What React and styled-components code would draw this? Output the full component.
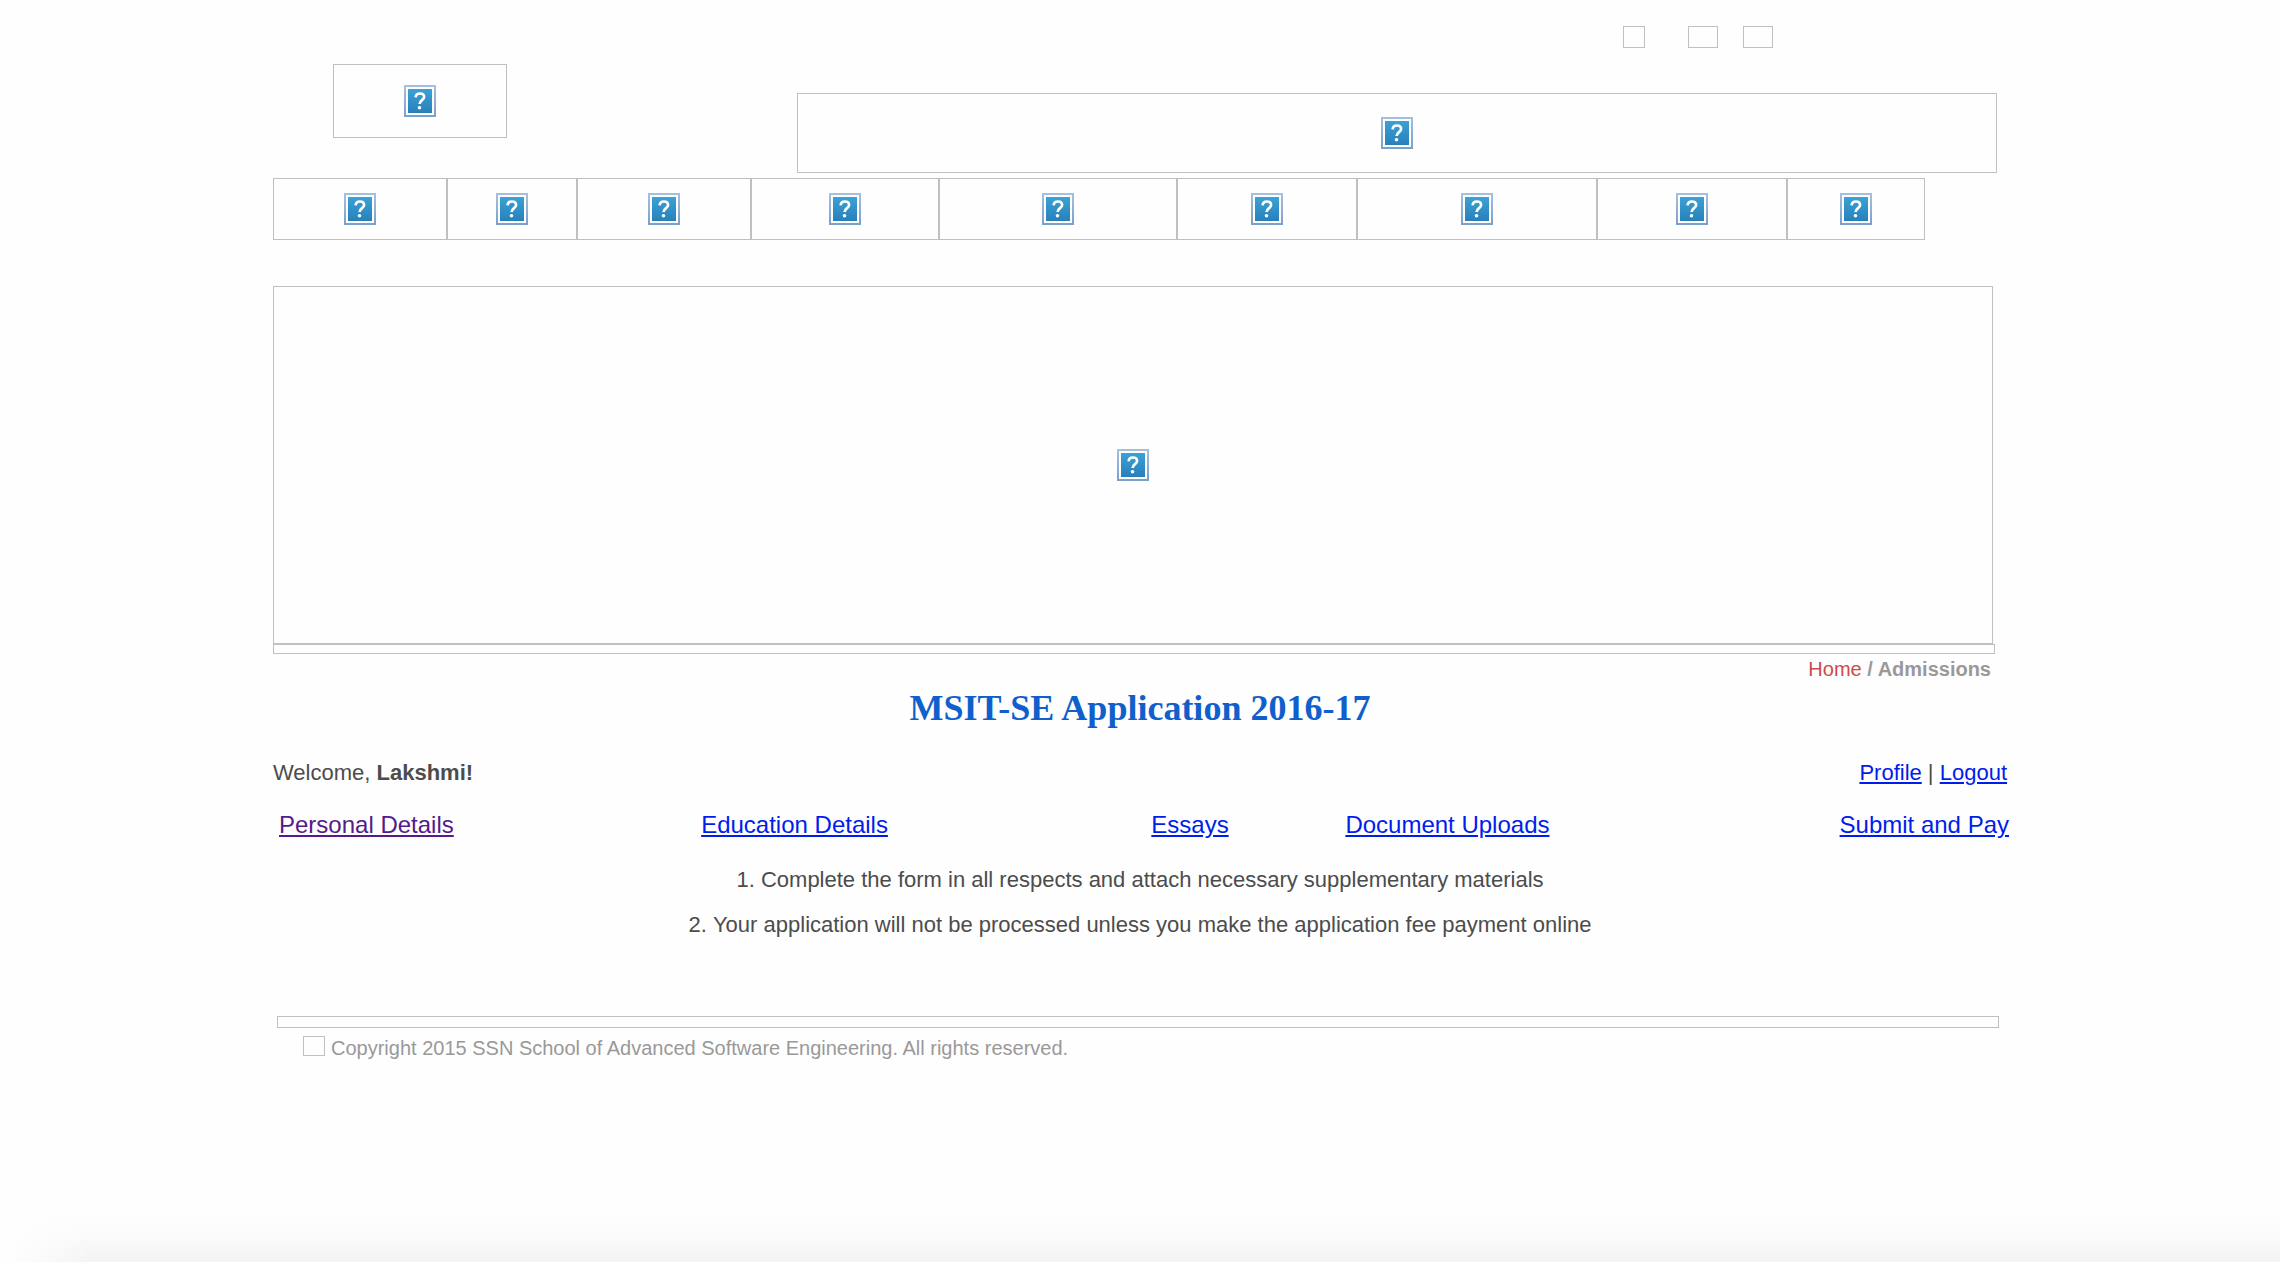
import React from "react";
import styled, { createGlobalStyle } from "styled-components";

const GlobalStyle = createGlobalStyle`
  * {
    box-sizing: border-box;
  }
  body {
    margin: 0;
    background: #fefefe;
    color: #4c4c4c;
    font-family: "Liberation Sans", Arial, Helvetica, sans-serif;
    font-size: 22px;
    line-height: 26px;
  }
`;

const Page = styled.div`
  display: flex;
  flex-direction: column;
  min-height: 100vh;
`;

const Container = styled.div`
  width: calc(100% - 32px);
  max-width: 1734px;
  margin: 0 auto;
  padding-top: 26px;
`;

const ImageFrame = styled.span`
  display: flex;
  align-items: center;
  justify-content: center;
  flex: none;
  width: ${(p) => (p.$width ? `${p.$width}px` : "auto")};
  height: ${(p) => p.$height}px;
  border: 1px solid #c0c0c0;
`;

const IconSvg = styled.svg`
  display: block;
  width: 32px;
  height: 32px;
`;

const Header = styled.header`
  display: grid;
  grid-template-columns: 174px minmax(0, 1200px);
  justify-content: space-between;
  padding: 0 10px 0 60px;
`;

const Shortcuts = styled.div`
  grid-column: 2;
  display: flex;
  justify-content: flex-end;
  gap: 25px;
  height: 38px;
  padding-right: 224px;
`;

const ShortcutLink = styled.a`
  display: block;
  margin-right: ${(p) => (p.$wide ? 18 : 0)}px;
`;

const Brand = styled.a`
  grid-row: 2;
  display: block;
`;

const Banner = styled.div`
  grid-row: 2;
  padding-top: 29px;
`;

const MainNav = styled.nav`
  display: flex;
  padding: 5px 0 46px;
`;

const NavLink = styled.a`
  display: block;
`;

const Hero = styled.div`
  margin-right: 14px;
`;

const Divider = styled.div`
  margin-right: 12px;
`;

const Breadcrumb = styled.nav`
  padding: 3px 16px 0 0;
  color: #999999;
  font-size: 20px;
  font-weight: bold;
  line-height: 24px;
  text-align: right;
`;

const HomeLink = styled.a`
  color: #cc4b4c;
  font-weight: normal;
  text-decoration: none;
`;

const Title = styled.h1`
  margin: 7px 0 0;
  color: #0f60cd;
  font-family: "Liberation Serif", "Times New Roman", serif;
  font-size: 36px;
  line-height: 40px;
  text-align: center;
`;

const AccountBar = styled.div`
  display: flex;
  justify-content: space-between;
  margin-top: 32px;
`;

const TextLink = styled.a`
  color: ${(p) => (p.$visited ? "#551a8b" : "#001dec")};
  text-decoration: underline;
`;

const Steps = styled.nav`
  display: grid;
  grid-template-columns: 422fr 450fr 194fr 494fr auto;
  margin: 24px -2px 0 6px;
  font-size: 24px;
  line-height: 30px;
`;

const Notes = styled.ol`
  display: flex;
  flex-direction: column;
  gap: 19px;
  margin: 27px 0 0;
  padding: 0;
  list-style-position: inside;
  text-align: center;
`;

const Footer = styled.footer`
  margin: 78px 8px 0 4px;
  color: #999999;
  font-size: 20px;
  line-height: 24px;
`;

const Copyright = styled.div`
  display: flex;
  gap: 6px;
  padding: 8px 26px;
`;

const BottomShade = styled.div`
  height: 52px;
  margin-top: auto;
  background: linear-gradient(to bottom, rgba(0, 0, 0, 0), rgba(0, 0, 0, 0.01) 45%, rgba(0, 0, 0, 0.04));
  mask-image: linear-gradient(to right, transparent 10px, #000 90px);
`;

function MissingIcon() {
  return (
    <IconSvg viewBox="0 0 32 32" aria-hidden="true">
      <defs>
        <linearGradient id="edge" x1="0" y1="0" x2="0" y2="1">
          <stop offset="0" stopColor="#a6c0df" />
          <stop offset="1" stopColor="#7a9fcb" />
        </linearGradient>
        <linearGradient id="face" x1="0" y1="0" x2="0" y2="1">
          <stop offset="0" stopColor="#3aa2d5" />
          <stop offset="1" stopColor="#2880bb" />
        </linearGradient>
      </defs>
      <rect width="32" height="32" fill="url(#edge)" />
      <rect x="2" y="2" width="28" height="28" fill="#fff" />
      <rect x="4" y="4" width="24" height="24" fill="url(#face)" />
      <path
        d="M11.6 12.4C11.8 9.8 13.4 8.5 15.9 8.5C18.6 8.5 20.1 9.9 20.1 12C20.1 15 15.6 15.4 15.6 19"
        fill="none"
        stroke="#fff"
        strokeWidth="2.7"
      />
      <circle cx="15.5" cy="22.7" r="1.8" fill="#fff" />
    </IconSvg>
  );
}

function MissingImage({ width, height }) {
  return (
    <ImageFrame $width={width} $height={height}>
      {height > 40 && <MissingIcon />}
    </ImageFrame>
  );
}

const navWidths = [174, 130, 174, 188, 238, 180, 240, 190, 138];

const steps = ["Personal Details", "Education Details", "Essays", "Document Uploads", "Submit and Pay"];

export default function App() {
  return (
    <Page>
      <GlobalStyle />
      <Container>
        <Header>
          <Shortcuts>
            <ShortcutLink href="#" $wide>
              <MissingImage width={22} height={22} />
            </ShortcutLink>
            <ShortcutLink href="#">
              <MissingImage width={30} height={22} />
            </ShortcutLink>
            <ShortcutLink href="#">
              <MissingImage width={30} height={22} />
            </ShortcutLink>
          </Shortcuts>
          <Brand href="#">
            <MissingImage width={174} height={74} />
          </Brand>
          <Banner>
            <MissingImage height={80} />
          </Banner>
        </Header>
        <MainNav>
          {navWidths.map((width, i) => (
            <NavLink key={i} href="#">
              <MissingImage width={width} height={62} />
            </NavLink>
          ))}
        </MainNav>
        <Hero>
          <MissingImage height={358} />
        </Hero>
        <Divider>
          <MissingImage height={10} />
        </Divider>
        <Breadcrumb>
          <HomeLink href="#">Home</HomeLink> / Admissions
        </Breadcrumb>
        <Title>MSIT-SE Application 2016-17</Title>
        <AccountBar>
          <span>
            Welcome, <b>Lakshmi!</b>
          </span>
          <span>
            <TextLink href="#">Profile</TextLink> | <TextLink href="#">Logout</TextLink>
          </span>
        </AccountBar>
        <Steps>
          {steps.map((step, i) => (
            <span key={step}>
              <TextLink href="#" $visited={i === 0}>
                {step}
              </TextLink>
            </span>
          ))}
        </Steps>
        <Notes>
          <li>Complete the form in all respects and attach necessary supplementary materials</li>
          <li>Your application will not be processed unless you make the application fee payment online</li>
        </Notes>
        <Footer>
          <MissingImage height={12} />
          <Copyright>
            <MissingImage width={22} height={20} />
            <span>Copyright 2015 SSN School of Advanced Software Engineering. All rights reserved.</span>
          </Copyright>
        </Footer>
      </Container>
      <BottomShade />
    </Page>
  );
}
